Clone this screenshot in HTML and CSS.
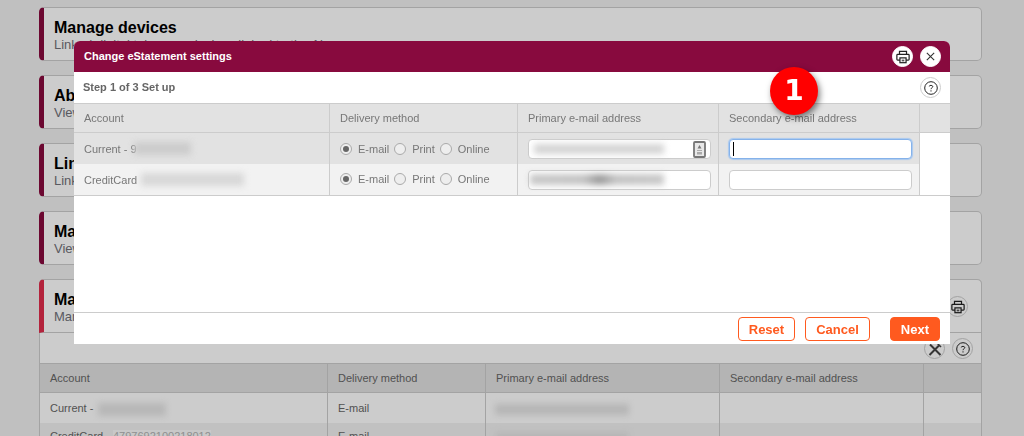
FILE: index.html
```html
<!DOCTYPE html>
<html lang="en">
<head>
  <meta charset="UTF-8" />
  <title>Change eStatement settings</title>
  <link rel="stylesheet" href="styles.css">
</head>
<body>

  <!-- Page behind the dialog -->
  <div class="page">
    <div class="card">
      <h2>Manage devices</h2>
      <p>Linked digital tokens or devices linked to the Al</p>
    </div>
    <div class="card">
      <h2>About</h2>
      <p>View your details</p>
    </div>
    <div class="card">
      <h2>Linked</h2>
      <p>Linked accounts</p>
    </div>
    <div class="card">
      <h2>Manage</h2>
      <p>View settings</p>
    </div>

    <div class="panel">
      <div class="card card-open">
        <div>
          <h2>Manage</h2>
          <p>Manage eStatement settings</p>
        </div>
        <span class="round-btn">
          <svg width="14" height="14" viewBox="0 0 16 16"><use href="#printer"/></svg>
        </span>
      </div>
      <div class="toolbar">
        <span class="round-btn">
          <svg width="16" height="16" viewBox="0 0 16 16" fill="none" stroke="#444" stroke-width="2"><path d="M2.5 14L12 4.5M3 3.5l10.5 10.5"/><path d="M10 2l4 4" stroke-width="1.6"/></svg>
        </span>
        <span class="round-btn">
          <svg width="16" height="16" viewBox="0 0 16 16"><use href="#help"/></svg>
        </span>
      </div>
      <div class="back-table">
        <div class="back-row back-head">
          <div>Account</div><div>Delivery method</div><div>Primary e-mail address</div><div>Secondary e-mail address</div><div></div>
        </div>
        <div class="back-row back-one">
          <div>Current - <span class="smudge smudge-back"></span></div><div>E-mail</div><div><span class="smudge smudge-mail"></span></div><div></div><div></div>
        </div>
        <div class="back-row back-alt">
          <div>CreditCard - <span class="card-no">4797692100218012</span></div><div>E-mail</div><div><span class="smudge smudge-mail"></span></div><div></div><div></div>
        </div>
      </div>
    </div>
  </div>

  <div class="shade"></div>

  <!-- Dialog -->
  <div class="dialog">
    <div class="dialog-head">
      <span class="lift">Change eStatement settings</span>
      <span class="head-btns">
        <span class="round-btn white">
          <svg width="14" height="14" viewBox="0 0 16 16"><use href="#printer"/></svg>
        </span>
        <span class="round-btn white">
          <svg width="11" height="11" viewBox="0 0 12 12" fill="none" stroke="#333" stroke-width="1.2"><path d="M2 2l8 8M10 2l-8 8"/></svg>
        </span>
      </span>
    </div>
    <div class="step">
      <span class="lift">Step 1 of 3 Set up</span>
      <span class="round-btn outline">
        <svg width="16" height="16" viewBox="0 0 16 16"><use href="#help"/></svg>
      </span>
    </div>

    <div class="grid">
      <div class="row row-head">
        <div>Account</div><div>Delivery method</div><div>Primary e-mail address</div><div>Secondary e-mail address</div><div></div>
      </div>
      <div class="row row-one">
        <div>Current - 9<span class="smudge smudge-one"></span></div>
        <div class="radios">
          <span class="radio on"></span>E-mail <span class="radio"></span>Print <span class="radio"></span>Online
        </div>
        <div>
          <span class="field">
            <span class="smudge smudge-field"></span>
            <svg class="contact" width="13" height="17" viewBox="0 0 13 17"><rect x="1" y="1" width="11" height="15" rx="1" fill="#e8e8e8" stroke="#777" stroke-width="1.8"/><path d="M6.5 4l2 3.5h-4z" fill="#777"/><path d="M4 9h5v1H4zM4 11h5v2.5H4z" fill="#aaa"/></svg>
          </span>
        </div>
        <div><span class="field focused"></span></div>
        <div class="blank"></div>
      </div>
      <div class="row row-two">
        <div>CreditCard <span class="smudge smudge-two"></span></div>
        <div class="radios">
          <span class="radio on"></span>E-mail <span class="radio"></span>Print <span class="radio"></span>Online
        </div>
        <div>
          <span class="field"><span class="smudge smudge-over"></span></span>
        </div>
        <div><span class="field"></span></div>
        <div class="blank"></div>
      </div>
    </div>

    <div class="dialog-foot">
      <button class="btn">Reset</button>
      <button class="btn">Cancel</button>
      <button class="btn btn-next">Next</button>
    </div>
  </div>

  <div class="badge">1</div>

  <!-- Shared icons -->
  <svg class="defs" width="0" height="0">
    <symbol id="printer" viewBox="0 0 16 16">
      <path d="M4 5V1.5h8V5" fill="none" stroke="#222" stroke-width="1.4"/>
      <rect x="1" y="5" width="14" height="6.5" rx="1" fill="none" stroke="#222" stroke-width="1.4"/>
      <rect x="4.5" y="9" width="7" height="5.5" fill="#fff" stroke="#222" stroke-width="1.4"/>
      <rect x="6.5" y="11" width="3" height="2" fill="#555"/>
    </symbol>
    <symbol id="help" viewBox="0 0 16 16">
      <circle cx="8" cy="8" r="6.3" fill="none" stroke="#222" stroke-width="1"/>
      <path d="M6.2 6.3C6.2 5 9.8 5 9.8 6.6 9.8 7.7 8 7.7 8 9.2" fill="none" stroke="#222" stroke-width="1"/>
      <rect x="7.5" y="10.3" width="1" height="1.2" fill="#222"/>
    </symbol>
  </svg>

</body>
</html>
```

FILE: styles.css
```css
body {
  margin: 0;
  height: 436px;
  overflow: hidden;
  background: #f0f0f0;
  font-family: "Liberation Sans", Arial, sans-serif;
  color: #555;
}

.defs {
  display: block;
}

/* page behind the dialog */
.page {
  margin: 0 42px 0 39px;
  padding-top: 7px;
  display: flex;
  flex-direction: column;
  gap: 14px;
}

.card {
  height: 54px;
  box-sizing: border-box;
  padding: 10px 10px 0 10px;
  background: #fff;
  border: 1px solid #ccc;
  border-left: 5px solid #880a3e;
  border-radius: 5px;
}

.card h2 {
  margin: 0;
  font-size: 16px;
  line-height: 20px;
  color: #000;
}

.card p {
  margin: 0;
  font-size: 13px;
  line-height: 13px;
  color: #707078;
}

.panel {
  background: #fff;
  border: 1px solid #ccc;
  border-top: 0;
  border-radius: 5px 5px 0 0;
}

.card-open {
  display: flex;
  justify-content: space-between;
  margin: 0 -1px;
  height: 54px;
  border-left-color: #e02c4c;
  border-radius: 5px 5px 0 0;
}

.round-btn {
  width: 21px;
  height: 21px;
  box-sizing: border-box;
  display: flex;
  align-items: center;
  justify-content: center;
  border-radius: 50%;
  border: 1px solid #ccc;
  flex: none;
}

.card-open .round-btn {
  margin: 6px 3px 0 0;
}

.toolbar {
  height: 30px;
  box-sizing: border-box;
  padding: 5px 8px 0 0;
  display: flex;
  justify-content: flex-end;
  gap: 7px;
}

.back-row {
  display: grid;
  grid-template-columns: 288px 158px 234px 204px 1fr;
  font-size: 11px;
  color: #666;
}

.back-row > div {
  height: 28px;
  line-height: 28px;
  padding-left: 10px;
  border-right: 1px solid #ccc;
  box-sizing: border-box;
  white-space: nowrap;
}

.back-row > div:last-child {
  border-right: 0;
}

.back-head {
  background: #e2e2e2;
  border-top: 1px solid #ccc;
  border-bottom: 1px solid #ccc;
}

.back-row.back-one > div {
  height: 30px;
  line-height: 30px;
}

.back-alt {
  background: #f2f2f2;
}

.back-row.back-alt > div {
  line-height: 26px;
}

.card-no {
  color: #b4b4b4;
  background: #fafafa;
}

.smudge {
  display: inline-block;
  vertical-align: middle;
  background: #ccc;
  filter: blur(3px);
}

.smudge-back { width: 68px; height: 13px; background: #e6e6e6; margin-left: 2px; }
.smudge-mail { width: 134px; height: 11px; background: #e4e4e4; margin-left: -1px; }

.shade {
  position: fixed;
  inset: 0;
  background: rgba(0, 0, 0, 0.2);
}

/* dialog */
.dialog {
  position: absolute;
  top: 41px;
  left: 74px;
  width: 876px;
  height: 303px;
  display: flex;
  flex-direction: column;
  background: #fff;
  border-radius: 6px 6px 0 0;
}

.dialog-head {
  height: 31px;
  flex: none;
  display: flex;
  align-items: center;
  justify-content: space-between;
  padding: 0 9px 0 10px;
  background: #880a3e;
  border-radius: 6px 6px 0 0;
  color: #fff;
  font-size: 11px;
  font-weight: bold;
}

.lift {
  margin-bottom: 2px;
}

.head-btns {
  display: flex;
  gap: 7px;
}

.round-btn.white {
  background: #fff;
  border-color: #fff;
}

.step {
  height: 31px;
  flex: none;
  display: flex;
  align-items: center;
  justify-content: space-between;
  padding: 0 9px;
  font-size: 11px;
  font-weight: bold;
  color: #666;
}

.grid {
  flex: 1;
}

.row {
  display: grid;
  grid-template-columns: 256px 188px 201px 201px 1fr;
  font-size: 11px;
  color: #777;
  border-top: 1px solid #ccc;
}

.row > div {
  display: flex;
  align-items: center;
  padding-left: 10px;
  box-sizing: border-box;
  border-right: 1px solid #ccc;
  white-space: nowrap;
}

.row > div:last-child {
  border-right: 0;
}

.row-head {
  height: 28px;
  background: #e2e2e2;
}

.row-one {
  height: 31px;
  background: #e2e2e2;
}

.row-two {
  height: 31px;
  background: #f2f2f2;
  border-top: 0;
  border-bottom: 1px solid #ccc;
}

.row-two > div.radios {
  padding-bottom: 1px;
}

.row > div.blank {
  background: #fff;
}

.smudge-one { width: 57px; height: 13px; background: #ccc; margin-left: -3px; }
.smudge-two { width: 103px; height: 13px; background: #d8d8d8; margin-left: 4px; }

.radio {
  width: 12px;
  height: 12px;
  box-sizing: border-box;
  border-radius: 50%;
  border: 1px solid #aaa;
  background: #eee;
  margin: 0 6px 0 5px;
  display: inline-flex;
  align-items: center;
  justify-content: center;
}

.radio:first-child {
  margin-left: 0;
}

.radio.on::after {
  content: "";
  width: 6px;
  height: 6px;
  border-radius: 50%;
  background: #666;
}

.field {
  position: relative;
  display: flex;
  align-items: center;
  width: 183px;
  height: 20px;
  box-sizing: border-box;
  background: #fff;
  border: 1px solid #ccc;
  border-radius: 4px;
}

.field.focused {
  border: 1px solid #85b2ea;
  box-shadow: 0 0 1px 1px #a9c9f0;
}

.field.focused::after {
  content: "";
  width: 1px;
  height: 14px;
  margin-left: 3px;
  background: #000;
}

.smudge-field { width: 130px; height: 10px; background: #d4d4d4; margin-left: 5px; }
.smudge-over {
  width: 134px;
  height: 11px;
  margin-left: 1px;
  background: linear-gradient(90deg, #c8c8c8, #c4c4c4 40%, #999 52%, #c4c4c4 64%, #c8c8c8);
}

.contact {
  position: absolute;
  right: 4px;
  top: 1px;
}

.dialog-foot {
  height: 32px;
  flex: none;
  display: flex;
  justify-content: flex-end;
  align-items: flex-start;
  box-sizing: border-box;
  padding: 4px 10px 0 0;
  border-top: 1px solid #ccc;
  gap: 10px;
}

.btn {
  height: 24px;
  padding: 0 10px;
  background: #fff;
  border: 1px solid #ff5a1f;
  border-radius: 4px;
  color: #ff5a1f;
  font-family: "Liberation Sans", Arial, sans-serif;
  font-size: 13px;
  font-weight: bold;
}

.btn-next {
  margin-left: 10px;
  background: #ff5a1f;
  color: #fff;
}

.badge {
  position: absolute;
  top: 67px;
  left: 770px;
  width: 48px;
  height: 48px;
  border-radius: 50%;
  background: #f00;
  color: #fff;
  font-family: "DejaVu Sans", sans-serif;
  font-weight: bold;
  font-size: 28px;
  line-height: 48px;
  text-align: center;
  box-shadow: 2px 3px 6px rgba(0, 0, 0, 0.5);
}
```
